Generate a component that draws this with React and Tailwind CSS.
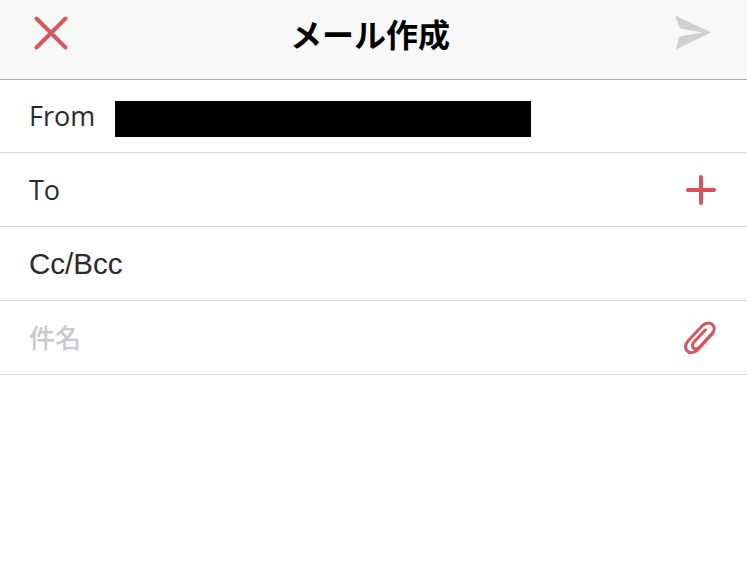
import React from 'react';

const CJK = "font-['Noto_Sans_CJK_JP',sans-serif]";

const CloseIcon = () => (
  <svg width="36" height="36" viewBox="0 0 36 36" fill="none" stroke="#d9585c" strokeWidth="4" strokeLinecap="round">
    <path d="M3.5 3.5 L32.5 32.5 M32.5 3.5 L3.5 32.5" />
  </svg>
);

const SendIcon = () => (
  <svg width="38" height="36" viewBox="0 0 38 36" fill="#d0d0d1">
    <path d="M1 0.5 L37 17.5 L2 34.5 L5 21.5 L29 17.5 L6 13.5 Z" />
  </svg>
);

const PlusIcon = () => (
  <svg width="30" height="30" viewBox="0 0 30 30" fill="none" stroke="#d9525a" strokeWidth="4" strokeLinecap="round">
    <path d="M15 2 V28 M2 15 H28" />
  </svg>
);

const ClipIcon = () => (
  <svg width="32" height="34" viewBox="0 0 32 34" fill="none" stroke="#d4585e" strokeWidth="3" strokeLinecap="round" strokeLinejoin="round">
    <path d="M29 12 L14 28.5 C10.5 32.5 5 32.5 2.8 29.5 C0.8 26.8 1.5 23 4 20 L18 5 C21 1.8 25.5 1.2 28.2 3.4 C31 5.8 30.8 9.6 28 12.6 L15.5 26 C13.6 28 11 28.4 9.4 27 C7.8 25.5 8.2 23 10 21 L21.5 8.8" />
  </svg>
);

const Row = ({ children, className = 'h-[74px]' }) => (
  <div className={`flex items-center justify-between border-b border-[#d9d9db] bg-white pl-[29px] ${className}`}>
    {children}
  </div>
);

export default function App() {
  return (
    <div className="h-[561px] w-[747px] overflow-hidden bg-white font-['Open_Sans',sans-serif] text-[27px] text-[#2b2b2d]">
      <div className="flex h-[80px] items-center justify-between border-b border-[#adadad] bg-[#f8f8f8] pb-[20px] pl-[33px] pr-[35px] pt-[7px]">
        <CloseIcon />
        <span className={`${CJK} mr-[3px] text-[32px] font-bold leading-none text-black`}>メール作成</span>
        <SendIcon />
      </div>

      <Row className="h-[73px] pt-[6px]">
        <div className="flex items-center">
          <span className="mb-[5px] w-[86px]">From</span>
          <div className="h-[36px] w-[416px] bg-black" />
        </div>
      </Row>
      <Row>
        <span className="mt-[2px]">To</span>
        <div className="pr-[31px]">
          <PlusIcon />
        </div>
      </Row>
      <Row>
        <span className="mt-[2px] font-['Liberation_Sans',sans-serif] text-[29.5px]">Cc/Bcc</span>
      </Row>
      <Row>
        <span className={`${CJK} mb-[2px] text-[26px] font-medium text-[#c8c8cd]`}>件名</span>
        <div className="pr-[31px]">
          <ClipIcon />
        </div>
      </Row>
    </div>
  );
}
